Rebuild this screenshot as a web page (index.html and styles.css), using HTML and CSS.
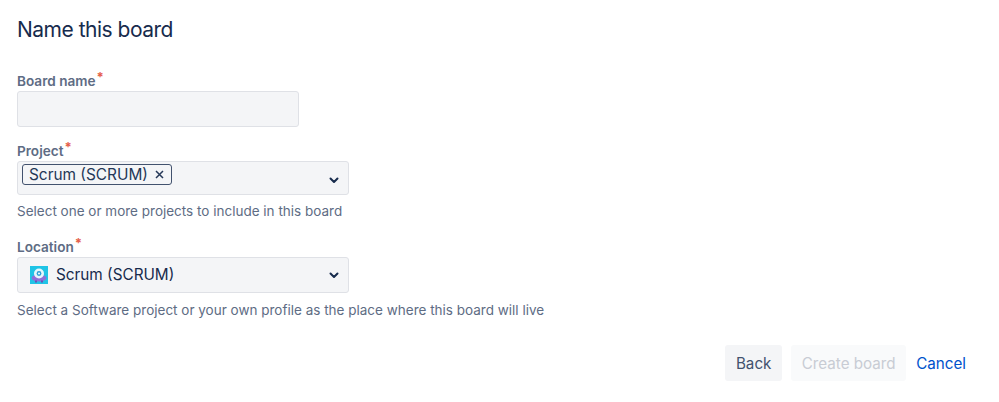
FILE: index.html
```html
<!DOCTYPE html>
<html lang="en">
<head>
  <meta charset="UTF-8">
  <title>Name this board</title>
  <link rel="stylesheet" href="styles.css">
</head>
<body>
  <h1>Name this board</h1>
  <form class="board-form">
    <div class="field field-name">
      <label class="label">Board name<span class="req">*</span></label>
      <input type="text" class="input">
    </div>
    <div class="field field-project">
      <label class="label">Project<span class="req">*</span></label>
      <div class="select select-project">
        <span class="tag">Scrum (SCRUM)<svg class="tag-x" width="9" height="9" viewBox="0 0 9 9"><path d="M1 1l7 7M8 1l-7 7" fill="none" stroke="#253858" stroke-width="1.5"/></svg></span>
        <svg class="chevron" width="12" height="8" viewBox="0 0 12 8"><path d="M2.5 2.5l3.5 3.5 3.5-3.5" fill="none" stroke="#172b4d" stroke-width="2" stroke-linecap="round" stroke-linejoin="round"/></svg>
      </div>
      <p class="help help-project">Select one or more projects to include in this board</p>
    </div>
    <div class="field field-location">
      <label class="label">Location<span class="req">*</span></label>
      <div class="select select-location">
        <svg class="avatar" width="18" height="18" viewBox="0 0 18 18">
          <rect width="18" height="18" fill="#1fc4e6"/>
          <ellipse cx="9" cy="12" rx="7.5" ry="3.5" fill="#8f6fd8"/>
          <rect x="5" y="14.5" width="2" height="2" fill="#6a4fb8"/>
          <rect x="11" y="14.5" width="2" height="2" fill="#6a4fb8"/>
          <circle cx="9" cy="7.5" r="5" fill="#e6f6fb"/>
          <circle cx="9" cy="7.5" r="2.4" fill="#2a9fd6"/>
          <circle cx="9" cy="7.5" r="1.1" fill="#e6f6fb"/>
        </svg>
        <span class="select-value">Scrum (SCRUM)</span>
        <svg class="chevron" width="12" height="8" viewBox="0 0 12 8"><path d="M2.5 2.5l3.5 3.5 3.5-3.5" fill="none" stroke="#172b4d" stroke-width="2" stroke-linecap="round" stroke-linejoin="round"/></svg>
      </div>
      <p class="help">Select a Software project or your own profile as the place where this board will live</p>
    </div>
    <div class="actions">
      <button type="button" class="btn btn-back">Back</button>
      <button type="button" class="btn btn-create" disabled>Create board</button>
      <a class="cancel" href="#">Cancel</a>
    </div>
  </form>
</body>
</html>
```

FILE: styles.css
```css
body {
  margin: 0;
  padding: 17px 33px 0 17px;
  font-family: Inter, "Liberation Sans", sans-serif;
  color: #172b4d;
  background-color: #ffffff;
}
h1 {
  margin: 0;
  font-size: 21px;
  font-weight: 400;
  line-height: 26px;
  letter-spacing: -0.5px;
  color: #172b4d;
}
.field-name {
  margin-top: 28px;
}
.field-project {
  margin-top: 14px;
}
.field-location {
  margin-top: 16px;
}
.label {
  display: block;
  height: 20px;
  font-size: 13.6px;
  font-weight: 600;
  line-height: 20px;
  color: #5e6c84;
}
.req {
  position: relative;
  top: -4px;
  margin-left: 1px;
  font-size: 13px;
  font-weight: 700;
  color: #e5604a;
}
.input {
  display: block;
  box-sizing: border-box;
  width: 282px;
  height: 36px;
  background-color: #f4f5f7;
  border: 1px solid #dfe1e6;
  border-radius: 3px;
  outline: none;
}
.select {
  box-sizing: border-box;
  display: flex;
  width: 332px;
  background-color: #f4f5f7;
  border: 1px solid #dfe1e6;
  border-radius: 3px;
}
.select-project {
  height: 34px;
  padding: 2px 0 0 4px;
  align-items: flex-start;
}
.select-location {
  height: 36px;
  padding: 0 0 0 12px;
  align-items: center;
}
.tag {
  box-sizing: border-box;
  display: flex;
  align-items: center;
  height: 21px;
  padding: 0 7px 0 6px;
  border: 1px solid #42526e;
  border-radius: 3px;
  font-size: 15.4px;
  color: #253858;
}
.tag-x {
  margin-left: 7px;
}
.select-value {
  margin-left: 8px;
  margin-bottom: 2px;
  font-size: 15.3px;
  color: #172b4d;
}
.chevron {
  margin-left: auto;
  margin-right: 8px;
}
.select-project .chevron {
  margin-top: 12px;
}
.avatar {
  flex: none;
}
.help {
  margin: 7px 0 0;
  font-size: 13.5px;
  line-height: 20px;
  color: #5e6c84;
}
.help-project {
  margin-top: 6px;
}
.actions {
  display: flex;
  align-items: center;
  justify-content: flex-end;
  margin-top: 25px;
}
.btn {
  height: 36px;
  border: none;
  border-radius: 3px;
  font-family: inherit;
  font-size: 15.2px;
}
.btn-back {
  width: 57px;
  background-color: #f4f5f7;
  color: #42526e;
}
.btn-create {
  width: 115px;
  margin-left: 9px;
  background-color: #f9fafb;
  color: #c8ccd4;
}
.cancel {
  margin-left: 10px;
  font-size: 15.2px;
  color: #0052cc;
  text-decoration: none;
}
```
